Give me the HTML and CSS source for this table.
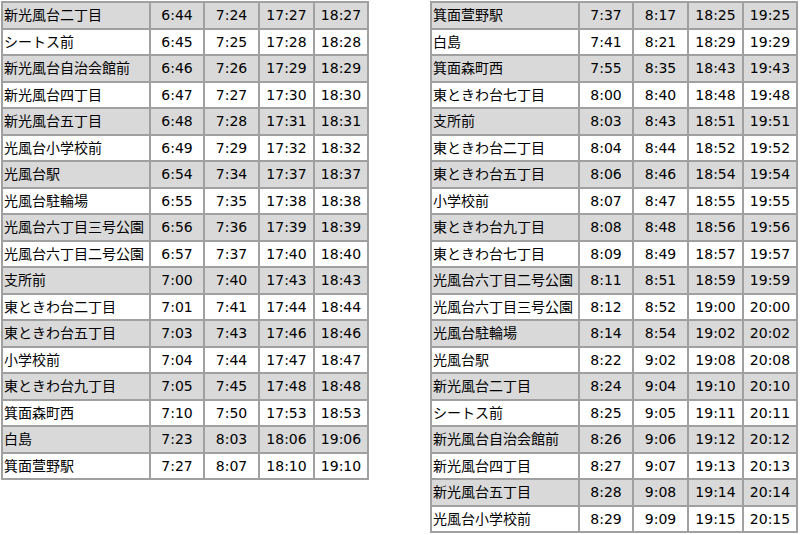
FILE: index.html
```html
<!DOCTYPE html>
<html lang="ja">
<head>
<meta charset="utf-8">
<title>時刻表</title>
<link rel="stylesheet" href="styles.css">
</head>
<body>
<div class="wrap">
<table class="tt">
<colgroup><col class="c-name"><col class="c-a"><col class="c-b"><col class="c-b"><col class="c-a"></colgroup>
<tr class="g"><td class="n">新光風台二丁目</td><td>6:44</td><td>7:24</td><td>17:27</td><td>18:27</td></tr>
<tr><td class="n">シートス前</td><td>6:45</td><td>7:25</td><td>17:28</td><td>18:28</td></tr>
<tr class="g"><td class="n">新光風台自治会館前</td><td>6:46</td><td>7:26</td><td>17:29</td><td>18:29</td></tr>
<tr><td class="n">新光風台四丁目</td><td>6:47</td><td>7:27</td><td>17:30</td><td>18:30</td></tr>
<tr class="g"><td class="n">新光風台五丁目</td><td>6:48</td><td>7:28</td><td>17:31</td><td>18:31</td></tr>
<tr><td class="n">光風台小学校前</td><td>6:49</td><td>7:29</td><td>17:32</td><td>18:32</td></tr>
<tr class="g"><td class="n">光風台駅</td><td>6:54</td><td>7:34</td><td>17:37</td><td>18:37</td></tr>
<tr><td class="n">光風台駐輪場</td><td>6:55</td><td>7:35</td><td>17:38</td><td>18:38</td></tr>
<tr class="g"><td class="n">光風台六丁目三号公園</td><td>6:56</td><td>7:36</td><td>17:39</td><td>18:39</td></tr>
<tr><td class="n">光風台六丁目二号公園</td><td>6:57</td><td>7:37</td><td>17:40</td><td>18:40</td></tr>
<tr class="g"><td class="n">支所前</td><td>7:00</td><td>7:40</td><td>17:43</td><td>18:43</td></tr>
<tr><td class="n">東ときわ台二丁目</td><td>7:01</td><td>7:41</td><td>17:44</td><td>18:44</td></tr>
<tr class="g"><td class="n">東ときわ台五丁目</td><td>7:03</td><td>7:43</td><td>17:46</td><td>18:46</td></tr>
<tr><td class="n">小学校前</td><td>7:04</td><td>7:44</td><td>17:47</td><td>18:47</td></tr>
<tr class="g"><td class="n">東ときわ台九丁目</td><td>7:05</td><td>7:45</td><td>17:48</td><td>18:48</td></tr>
<tr><td class="n">箕面森町西</td><td>7:10</td><td>7:50</td><td>17:53</td><td>18:53</td></tr>
<tr class="g"><td class="n">白島</td><td>7:23</td><td>8:03</td><td>18:06</td><td>19:06</td></tr>
<tr><td class="n">箕面萱野駅</td><td>7:27</td><td>8:07</td><td>18:10</td><td>19:10</td></tr>
</table>
<table class="tt">
<colgroup><col class="c-name"><col class="c-a"><col class="c-b"><col class="c-b"><col class="c-a"></colgroup>
<tr class="g"><td class="n">箕面萱野駅</td><td>7:37</td><td>8:17</td><td>18:25</td><td>19:25</td></tr>
<tr><td class="n">白島</td><td>7:41</td><td>8:21</td><td>18:29</td><td>19:29</td></tr>
<tr class="g"><td class="n">箕面森町西</td><td>7:55</td><td>8:35</td><td>18:43</td><td>19:43</td></tr>
<tr><td class="n">東ときわ台七丁目</td><td>8:00</td><td>8:40</td><td>18:48</td><td>19:48</td></tr>
<tr class="g"><td class="n">支所前</td><td>8:03</td><td>8:43</td><td>18:51</td><td>19:51</td></tr>
<tr><td class="n">東ときわ台二丁目</td><td>8:04</td><td>8:44</td><td>18:52</td><td>19:52</td></tr>
<tr class="g"><td class="n">東ときわ台五丁目</td><td>8:06</td><td>8:46</td><td>18:54</td><td>19:54</td></tr>
<tr><td class="n">小学校前</td><td>8:07</td><td>8:47</td><td>18:55</td><td>19:55</td></tr>
<tr class="g"><td class="n">東ときわ台九丁目</td><td>8:08</td><td>8:48</td><td>18:56</td><td>19:56</td></tr>
<tr><td class="n">東ときわ台七丁目</td><td>8:09</td><td>8:49</td><td>18:57</td><td>19:57</td></tr>
<tr class="g"><td class="n">光風台六丁目二号公園</td><td>8:11</td><td>8:51</td><td>18:59</td><td>19:59</td></tr>
<tr><td class="n">光風台六丁目三号公園</td><td>8:12</td><td>8:52</td><td>19:00</td><td>20:00</td></tr>
<tr class="g"><td class="n">光風台駐輪場</td><td>8:14</td><td>8:54</td><td>19:02</td><td>20:02</td></tr>
<tr><td class="n">光風台駅</td><td>8:22</td><td>9:02</td><td>19:08</td><td>20:08</td></tr>
<tr class="g"><td class="n">新光風台二丁目</td><td>8:24</td><td>9:04</td><td>19:10</td><td>20:10</td></tr>
<tr><td class="n">シートス前</td><td>8:25</td><td>9:05</td><td>19:11</td><td>20:11</td></tr>
<tr class="g"><td class="n">新光風台自治会館前</td><td>8:26</td><td>9:06</td><td>19:12</td><td>20:12</td></tr>
<tr><td class="n">新光風台四丁目</td><td>8:27</td><td>9:07</td><td>19:13</td><td>20:13</td></tr>
<tr class="g"><td class="n">新光風台五丁目</td><td>8:28</td><td>9:08</td><td>19:14</td><td>20:14</td></tr>
<tr><td class="n">光風台小学校前</td><td>8:29</td><td>9:09</td><td>19:15</td><td>20:15</td></tr>
</table>
</div>
</body>
</html>
```
FILE: styles.css
```css
html, body {
  margin: 0;
  padding: 0;
  background: #fff;
}
body {
  font-family: "DejaVu Sans", "Noto Sans CJK JP", sans-serif;
  font-size: 14px;
  color: #000;
}
.wrap {
  display: flex;
  align-items: flex-start;
  gap: 61px;
  padding: 1px 0 0 1px;
}
.tt {
  border-collapse: separate;
  border-spacing: 0;
  border: 1px solid #a0a0a0;
  table-layout: fixed;
  width: 368px;
  box-sizing: border-box;
  flex: none;
}
.c-name { width: 148px; }
.c-a { width: 54px; }
.c-b { width: 55px; }
.tt td {
  box-sizing: border-box;
  border: 1px solid #a0a0a0;
  height: 26.5px;
  padding: 0 1px;
  line-height: 20px;
  text-align: center;
  white-space: nowrap;
}
.tt td.n {
  text-align: left;
}
.tt tr.g td {
  background: #d9d9d9;
}
```
